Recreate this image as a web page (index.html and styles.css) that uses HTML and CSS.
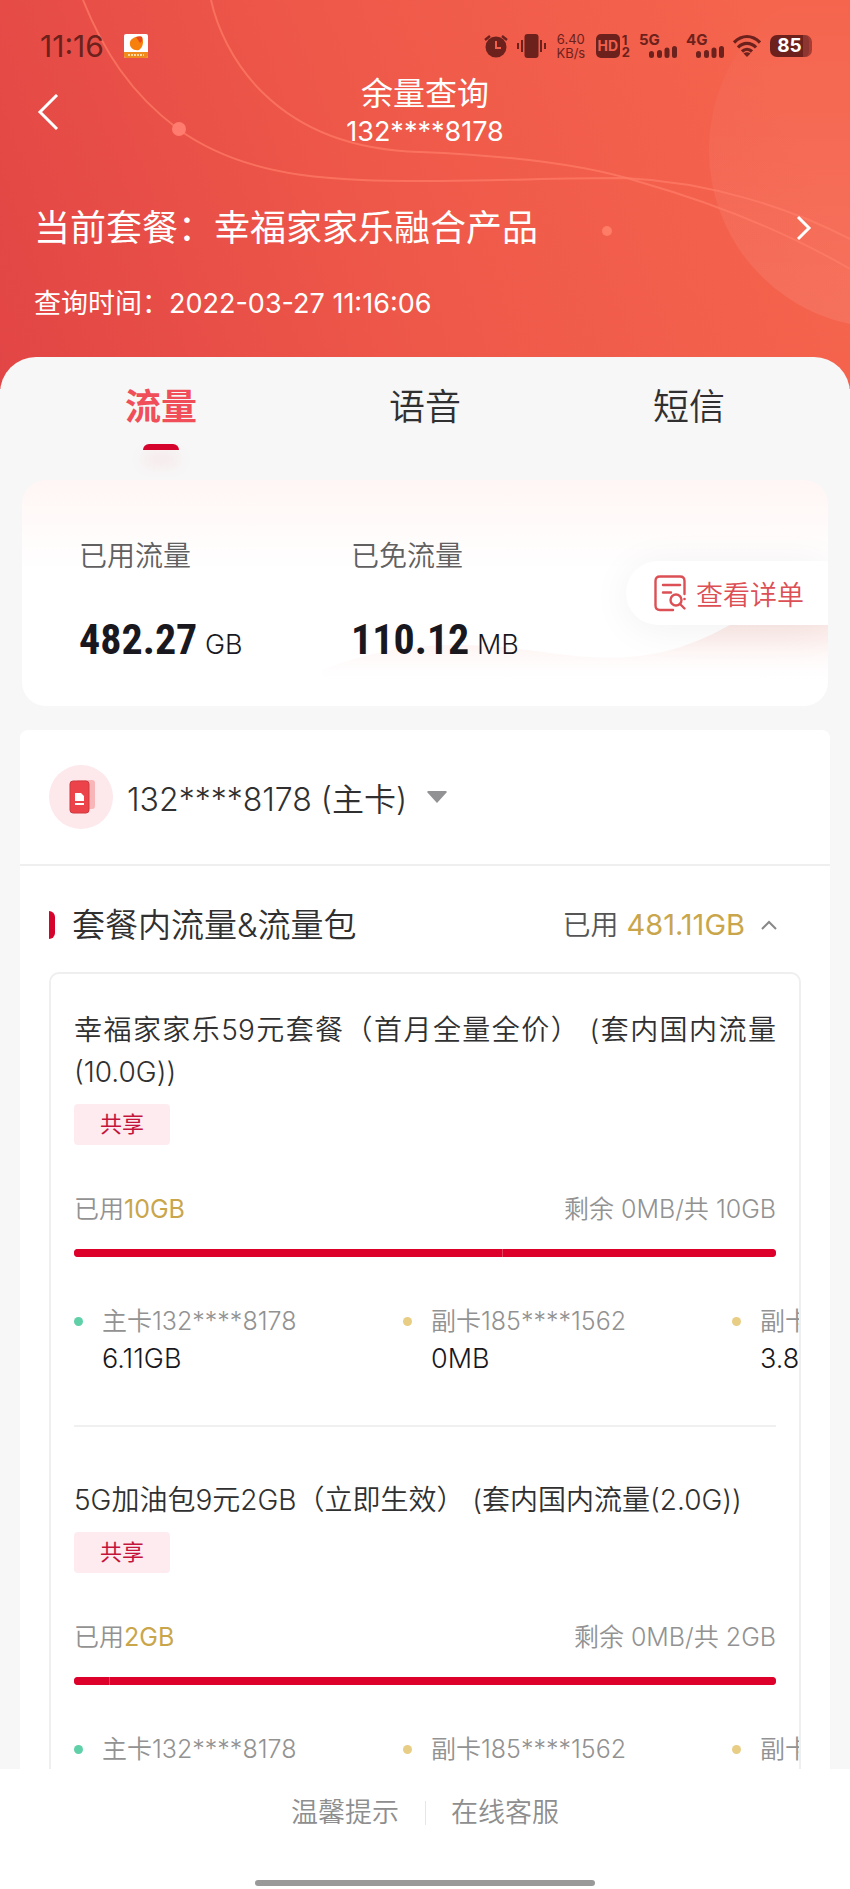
FILE: index.html
```html
<!DOCTYPE html>
<html lang="zh-CN">
<head>
<meta charset="utf-8">
<meta name="viewport" content="width=device-width, initial-scale=1">
<title>余量查询</title>
<link rel="stylesheet" href="styles.css">
</head>
<body>
<div class="app">
  <header class="hero">
    <svg class="hero-art" viewBox="0 0 850 393" preserveAspectRatio="xMaxYMin slice" aria-hidden="true">
      <defs>
        <linearGradient id="orb" x1="0" y1="0" x2="0" y2="1">
          <stop offset="0" stop-color="#fff" stop-opacity="0"/>
          <stop offset="1" stop-color="#fff" stop-opacity=".09"/>
        </linearGradient>
      </defs>
      <circle cx="887" cy="150" r="178" fill="url(#orb)"/>
      <g fill="none" stroke="#ff7d68" stroke-opacity=".7" stroke-width="2">
        <path d="M83 0C103 50 130 93 178 129C250 181 340 181 440 181C520 180 560 178 625 178C710 182 790 208 850 239"/>
        <path d="M211 0C222 50 270 148 420 152C520 156 590 166 640 182C720 205 790 234 850 269"/>
      </g>
      <circle cx="179" cy="129" r="7" fill="#ff7c6e"/>
      <circle cx="607" cy="231" r="5" fill="#ff7c66"/>
    </svg>

    <div class="status">
      <div class="status-side">
        <time>11:16</time>
        <svg width="24" height="24" viewBox="0 0 24 24" aria-hidden="true">
          <rect width="24" height="24" rx="2" fill="#fff"/>
          <path d="M0 18h24v4a2 2 0 0 1-2 2H2a2 2 0 0 1-2-2z" fill="#f08a1c"/>
          <path d="M4 21h16" stroke="#ffd9a0" stroke-width="2" stroke-dasharray="2 1"/>
          <path d="M6 8C7 4 12 2 18 3c2 5 1 10-3 13-5 1-10-2-9-8z" fill="#f77f0c"/>
          <path d="M12 3c3-1 5-1 6 0 1 3 0 5-2 6z" fill="#e9481c"/>
        </svg>
      </div>
      <div class="status-side status-icons">
        <svg width="24" height="24" viewBox="0 0 24 24" aria-hidden="true">
          <circle cx="12" cy="13" r="10.500" fill="currentColor"/>
          <path d="M1 6 6 2M23 6l-5-4" stroke="currentColor" stroke-width="2.500" fill="none"/>
          <path d="M12 7v7h5" stroke="#f25f4c" stroke-width="2" fill="none"/>
        </svg>
        <svg width="29" height="24" viewBox="0 0 29 24" aria-hidden="true">
          <rect x="7.500" width="14" height="24" rx="3" fill="currentColor"/>
          <path d="M1 9v6M5 6v12M24 6v12M28 9v6" stroke="currentColor" stroke-width="2"/>
        </svg>
        <div class="speed"><span>6.40</span><span>KB/s</span></div>
        <div class="volte">
          <span class="hd">HD</span>
          <div class="sims"><span>1</span><span>2</span></div>
        </div>
        <div class="signal">
          <span>5G</span>
          <svg width="28" height="12" viewBox="0 0 28 12" aria-hidden="true"><path d="M2.500 7.500v2M10.500 6.500v3M18 4v5.500M25.500 2.500v7" stroke="currentColor" stroke-width="5" stroke-linecap="round"/></svg>
        </div>
        <div class="signal">
          <span>4G</span>
          <svg width="28" height="12" viewBox="0 0 28 12" aria-hidden="true"><path d="M2.500 7.500v2M10.500 6.500v3M18 4v5.500M25.500 2.500v7" stroke="currentColor" stroke-width="5" stroke-linecap="round"/></svg>
        </div>
        <svg width="28" height="24" viewBox="0 0 28 24" aria-hidden="true">
          <path d="M1 8.500C9 .500 19 .500 27 8.500M5 13.500c5-5.500 13-5.500 18 0M9 17.500c3-3 7-3 10 0" fill="none" stroke="currentColor" stroke-width="3.200"/>
          <path d="M10.500 19.500q3.500-2.500 7 0L14 23z" fill="currentColor"/>
        </svg>
        <div class="battery">85</div>
      </div>
    </div>

    <div class="titlebar">
      <button class="back" aria-label="返回"><svg width="22" height="36" viewBox="0 0 22 36"><path d="M20 1 3 18l17 17" fill="none" stroke="#fff" stroke-width="3"/></svg></button>
      <div class="titles">
        <h1>余量查询</h1>
        <p>132****8178</p>
      </div>
    </div>

    <a class="plan" href="#plan">
      <span>当前套餐：幸福家家乐融合产品</span>
      <svg width="16" height="26" viewBox="0 0 16 26" aria-hidden="true"><path d="M2 2l11 11L2 24" fill="none" stroke="#fff" stroke-width="3"/></svg>
    </a>
    <p class="asked">查询时间：2022-03-27 11:16:06</p>
  </header>

  <main class="panel">
    <nav class="tabs">
      <button class="tab tab-on">流量</button>
      <button class="tab">语音</button>
      <button class="tab">短信</button>
    </nav>

    <section class="summary">
      <svg class="wave" viewBox="0 0 805 226" preserveAspectRatio="none" aria-hidden="true">
        <defs>
          <linearGradient id="tide" x1="0" y1="0" x2="0" y2="1">
            <stop offset="0" stop-color="#fbe3de"/>
            <stop offset=".5" stop-color="#fdf0ee"/>
            <stop offset="1" stop-color="#fff" stop-opacity="0"/>
          </linearGradient>
        </defs>
        <path d="M300 190C370 162 440 160 520 172C590 182 640 182 705 146C735 130 770 116 805 112V206H300z" fill="url(#tide)"/>
      </svg>
      <dl class="figures">
        <div>
          <dt>已用流量</dt>
          <dd><b>482.27</b> GB</dd>
        </div>
        <div>
          <dt>已免流量</dt>
          <dd><b>110.12</b> MB</dd>
        </div>
      </dl>
      <a class="detail" href="#detail">
        <svg width="32" height="37" viewBox="0 0 32 37" aria-hidden="true">
          <g fill="none" stroke="#dc5055" stroke-width="2.400" stroke-linecap="round">
            <path d="M19 35H6q-4.500 0-4.500-4.500V6Q1.500 1.500 6 1.500h20q4.500 0 4.500 4.500v13"/>
            <path d="M9 10h17M9 17.500h8"/>
            <circle cx="22" cy="25" r="5.500"/>
            <path d="M26 29l4.500 4.500"/>
          </g>
          <circle cx="30.500" cy="24" r="1.300" fill="#dc5055"/>
        </svg>
        查看详单
      </a>
    </section>

    <section class="usage">
      <button class="card-pick">
        <svg width="64" height="64" viewBox="0 0 64 64" aria-hidden="true">
          <circle cx="32" cy="32" r="32" fill="#fde8ec"/>
          <rect x="27" y="15" width="19" height="29" rx="3" fill="#f9b6b8"/>
          <rect x="21" y="16" width="19" height="32" rx="3" fill="#ec4249" stroke="#cf3a40" stroke-width="1"/>
          <path d="M26 28h6l3 3v5h-9zM26 38h9v2h-9z" fill="#fff"/>
        </svg>
        <span>132****8178 (主卡)</span>
        <svg width="20" height="12" viewBox="0 0 20 12" aria-hidden="true"><path d="M1 0h18l1 1-10 11L0 1z" fill="#929295"/></svg>
      </button>

      <div class="group">
        <div class="group-head">
          <h2>套餐内流量&amp;流量包</h2>
          <button class="fold">已用 <em>481.11GB</em>
            <svg width="16" height="10" viewBox="0 0 16 10" aria-hidden="true"><path d="M1 9l7-7 7 7" fill="none" stroke="#888" stroke-width="2"/></svg>
          </button>
        </div>

        <div class="packs">
          <article class="pack">
            <h3>幸福家家乐59元套餐（首月全量全价） (套内国内流量(10.0G))</h3>
            <span class="tag">共享</span>
            <p class="amount"><span>已用<em>10GB</em></span><span>剩余 0MB/共 10GB</span></p>
            <div class="meter"><i style="width:61%"></i><i style="width:39%"></i></div>
            <ul class="members">
              <li class="main-card">主卡132****8178<b>6.11GB</b></li>
              <li>副卡185****1562<b>0MB</b></li>
              <li>副卡<b>3.89GB</b></li>
            </ul>
          </article>
          <article class="pack">
            <h3>5G加油包9元2GB（立即生效） (套内国内流量(2.0G))</h3>
            <span class="tag">共享</span>
            <p class="amount"><span>已用<em>2GB</em></span><span>剩余 0MB/共 2GB</span></p>
            <div class="meter"><i style="width:5%"></i><i style="width:95%"></i></div>
            <ul class="members">
              <li class="main-card">主卡132****8178</li>
              <li>副卡185****1562</li>
              <li>副卡</li>
            </ul>
          </article>
        </div>
      </div>
    </section>
  </main>

  <footer class="foot">
    <nav class="links">
      <a href="#tips">温馨提示</a>
      <a href="#service">在线客服</a>
    </nav>
    <div class="home"></div>
  </footer>
</div>
</body>
</html>
```
FILE: styles.css
```css
* { box-sizing: border-box; margin: 0; padding: 0; }

body {
  background: #f7f7f7;
  color: #303030;
  font-family: Inter, "Noto Sans CJK SC", sans-serif;
  font-weight: 350;
}

button { background: none; border: 0; color: inherit; font: inherit; }
a { color: inherit; text-decoration: none; }
em { font-style: normal; font-weight: 400; color: #c9a64b; }
svg { display: block; flex: none; }
h1, h2, h3 { font-weight: inherit; }

.app { display: flex; flex-direction: column; height: 100vh; }

/* Header */
.hero {
  position: relative;
  flex: none;
  padding: 28px 34px 65px;
  margin-bottom: -32px;
  background: linear-gradient(70deg, #e24545 0%, #ee5849 45%, #f5644d 90%);
  color: #fff;
}
.hero-art { position: absolute; inset: 0; width: 100%; height: 100%; }
.hero > :not(.hero-art) { position: relative; }

.status { display: flex; justify-content: space-between; align-items: center; height: 36px; padding: 0 4px 0 6px; color: #6c211d; }
.status-side { display: flex; align-items: center; gap: 20px; font-size: 30px; font-weight: 400; }
.status-icons { gap: 9px; }
.speed { display: grid; width: 32px; font-size: 13px; line-height: 14px; text-align: center; }
.volte { display: flex; gap: 2px; height: 24px; font-weight: 700; }
.hd { width: 24px; border-radius: 5px; background: #6c211d; color: #f2604d; font-size: 14px; line-height: 24px; text-align: center; }
.sims { display: grid; font-size: 13px; line-height: 12px; }
.signal { display: grid; grid-template-columns: 10px 28px; height: 24px; font-size: 15px; line-height: 12px; font-weight: 700; }
.signal span { white-space: nowrap; }
.signal svg { grid-area: 2 / 2; }
.battery {
  width: 42px;
  border-right: 3px solid #a63c33;
  border-radius: 7px;
  background: linear-gradient(90deg, #6c211d 85%, #8d3530 85%);
  color: #fff;
  font-size: 19px;
  line-height: 22px;
  font-weight: 700;
  text-align: center;
}

.titlebar { display: grid; grid-template-columns: 40px 1fr 40px; align-items: center; margin-top: 8px; }
.back { height: 64px; padding: 4px 3px 0; }
.titles { text-align: center; font-weight: 400; }
.titles h1 { font-size: 32px; line-height: 44px; }
.titles p { font-size: 27px; line-height: 32px; }

.plan { display: flex; justify-content: space-between; align-items: center; margin-top: 52px; padding-right: 4px; font-size: 36px; line-height: 56px; font-weight: 400; }
.asked { margin-top: 28px; font-size: 27px; line-height: 40px; font-weight: 400; }

/* Panel */
.panel {
  position: relative;
  flex: 1;
  min-height: 0;
  overflow: hidden;
  padding: 0 20px;
  border-radius: 36px 36px 0 0;
  background: #f7f7f7;
}

.tabs { display: grid; grid-template-columns: repeat(3, 1fr); padding: 24px 9px 0; }
.tab { display: flex; flex-direction: column; align-items: center; height: 99px; font-size: 36px; line-height: 52px; }
.tab-on { color: #f04f59; font-weight: 700; }
.tab-on::after {
  content: "";
  width: 36px;
  height: 6px;
  margin-top: 11px;
  border-radius: 6px 6px 0 0;
  background: #d5042d;
  box-shadow: 0 12px 16px rgba(240, 80, 90, .2);
}

.summary {
  position: relative;
  display: flex;
  align-items: center;
  justify-content: space-between;
  height: 226px;
  margin: 0 2px 24px;
  padding-left: 57px;
  overflow: hidden;
  border-radius: 24px;
  background: linear-gradient(#fff6f5, #fff 40%);
}
.wave { position: absolute; inset: 0; width: 100%; height: 100%; }
.figures { position: relative; display: grid; grid-template-columns: 272px auto; padding-top: 24px; }
.figures dt { font-size: 28px; line-height: 40px; color: #606060; }
.figures dd { margin-top: 34px; font-size: 27px; line-height: 60px; color: #18181e; }
.figures b { font: 700 42px/60px "Roboto Condensed", "Open Sans Condensed", "Noto Sans Condensed", "Liberation Sans Narrow", Roboto, sans-serif; }
.detail {
  position: relative;
  display: flex;
  align-items: center;
  gap: 10px;
  height: 64px;
  padding: 0 24px 0 28px;
  border-radius: 32px 0 0 32px;
  background: #fff;
  box-shadow: 0 4px 40px rgba(0, 0, 0, .06);
  color: #dc5055;
  font-size: 27px;
}

.usage { border-radius: 8px 8px 0 0; background: #fff; }
.card-pick {
  display: flex;
  align-items: center;
  gap: 14px;
  width: 100%;
  height: 136px;
  padding: 0 29px;
  border-bottom: 2px solid #efefef;
  font-size: 32px;
}
.card-pick span { margin-right: 6px; }

.group { padding: 30px 29px 0; }
.group-head { display: flex; justify-content: space-between; align-items: center; height: 58px; padding-right: 24px; }
.group-head h2 { display: flex; align-items: center; gap: 17px; font-size: 33px; line-height: 44px; }
.group-head h2::before { content: ""; width: 6px; height: 28px; border-radius: 0 6px 6px 0; background: #d5042d; }
.fold { display: flex; align-items: center; gap: 8px; font-size: 28px; line-height: 40px; color: #555; }
.fold em { font-size: 29px; }
.fold svg { margin-left: 8px; }

.packs { margin-top: 18px; padding: 0 23px; overflow: hidden; border: 2px solid #efefef; border-radius: 10px; }
.pack { height: 453px; padding-top: 35px; border-bottom: 2px solid #f0f0f0; }
.pack + .pack { height: auto; padding: 52px 0 60px; border: 0; }
.pack h3 { font-size: 28px; line-height: 42px; text-align: justify; }
.tag {
  display: block;
  width: 96px;
  margin-top: 11px;
  border-radius: 4px;
  background: #fdebf0;
  color: #c4143c;
  font-size: 22px;
  line-height: 41px;
  font-weight: 400;
  text-align: center;
}
.amount { display: flex; justify-content: space-between; margin-top: 46px; color: #929292; font-size: 25px; line-height: 36px; }
.meter { display: flex; gap: 1px; height: 8px; margin-top: 22px; overflow: hidden; border-radius: 4px; background: #e8405f; }
.meter i { background: #dd002a; }
.members { display: flex; margin-top: 46px; list-style: none; }
.members li { position: relative; flex: none; width: 329px; padding-left: 28px; color: #929292; font-size: 25px; line-height: 37px; white-space: nowrap; }
.members li::before { content: ""; position: absolute; left: 0; top: 14px; width: 9px; height: 9px; border-radius: 50%; background: #e8cd85; }
.members .main-card::before { background: #5fd0a8; }
.members b { display: block; color: #18181e; font-size: 27px; font-weight: 350; }

/* Footer */
.foot { flex: none; display: flex; flex-direction: column; align-items: center; justify-content: space-between; height: 120px; padding: 24px 0 3px; background: #fff; }
.links { display: flex; color: #8e8e8e; font-size: 27px; line-height: 40px; }
.links a { padding: 0 26px; }
.links a + a { background: linear-gradient(#e6e6e6, #e6e6e6) left center / 1px 24px no-repeat; }
.home { width: 40%; height: 6px; border-radius: 3px; background: #999; }
```
